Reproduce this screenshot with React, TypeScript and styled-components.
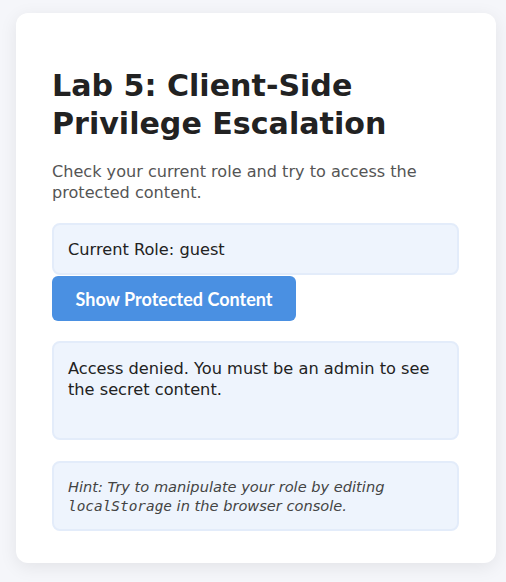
import React from "react";
import styled, { createGlobalStyle } from "styled-components";

const Global = createGlobalStyle`
  html, body { margin: 0; padding: 0; background: #f5f6fa; }
  body { font-family: "DejaVu Sans", sans-serif; }
`;

const Page = styled.div`
  padding: 13px 10px 20px 16px;
`;

const Card = styled.div`
  width: 480px;
  box-sizing: border-box;
  background: #ffffff;
  border-radius: 12px;
  box-shadow: 0 4px 18px rgba(0, 0, 0, 0.08);
  padding: 54px 37px 32px 36px;
  display: flex;
  flex-direction: column;
`;

const Title = styled.h1`
  margin: 0;
  font-family: "DejaVu Sans", sans-serif;
  font-weight: bold;
  font-size: 30.1px;
  line-height: 38px;
  color: #222222;
`;

const Lead = styled.p`
  margin: 18px 0 20px;
  font-size: 16.1px;
  line-height: 21px;
  color: #555555;
`;

const Panel = styled.div<{ $min?: number }>`
  box-sizing: border-box;
  background: #eef4fd;
  border: 2px solid #e3ecfa;
  border-radius: 8px;
  padding: 15px 14px 13px;
  min-height: ${(p) => (p.$min ? `${p.$min}px` : "auto")};
  font-size: 16.2px;
  line-height: 20px;
  color: #222222;
`;

const Message = styled(Panel)`
  padding: 15px 14px;
  line-height: 21px;
`;

const Hint = styled(Panel)`
  padding: 14px 14px 13px;
  font-size: 14.6px;
  line-height: 19px;
  font-style: italic;
  color: #444444;
`;

const Code = styled.code`
  font-family: "DejaVu Sans Mono", monospace;
  font-style: italic;
  font-size: 14.4px;
`;

const Button = styled.button`
  align-self: flex-start;
  margin: 1px 0 20px;
  width: 244px;
  height: 45px;
  border: none;
  border-radius: 6px;
  background: #4a90e2;
  color: #ffffff;
  font-family: Lato, sans-serif;
  font-weight: bold;
  font-size: 18px;
  cursor: pointer;
`;

const Spacer = styled.div`
  height: 21px;
`;

export default function App() {
  return (
    <>
      <Global />
      <Page>
        <Card>
          <Title>Lab 5: Client-Side Privilege Escalation</Title>
          <Lead>Check your current role and try to access the protected content.</Lead>
          <Panel>Current Role: guest</Panel>
          <Button>Show Protected Content</Button>
          <Message $min={99}>
            Access denied. You must be an admin to see the secret content.
          </Message>
          <Spacer />
          <Hint>
            Hint: Try to manipulate your role by editing <Code>localStorage</Code> in the browser console.
          </Hint>
        </Card>
      </Page>
    </>
  );
}
